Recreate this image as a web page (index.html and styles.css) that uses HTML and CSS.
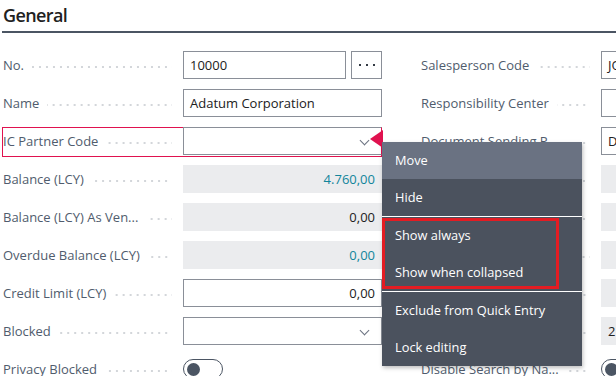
FILE: index.html
```html
<!DOCTYPE html>
<html lang="en">
<head>
  <meta charset="UTF-8">
  <title>Customer Card - General</title>
  <link rel="stylesheet" href="styles.css">
</head>
<body>

<div class="page">
  <h2 class="section-title">General</h2>

  <div class="columns">
    <div class="col">
      <div class="row">
        <span class="label"><span class="caption">No.</span><span class="leader"></span></span>
        <div class="field with-button">
          <div class="box">10000</div>
          <div class="more"><i></i><i></i><i></i></div>
        </div>
      </div>
      <div class="row">
        <span class="label"><span class="caption">Name</span><span class="leader"></span></span>
        <div class="field"><div class="box">Adatum Corporation</div></div>
      </div>
      <div class="row row-selected">
        <span class="label"><span class="caption">IC Partner Code</span><span class="leader"></span></span>
        <div class="field"><div class="box select"><span class="chevron"></span></div></div>
        <span class="pointer"></span>
      </div>
      <div class="row">
        <span class="label"><span class="caption">Balance (LCY)</span><span class="leader"></span></span>
        <div class="field"><div class="box readonly number link">4.760,00</div></div>
      </div>
      <div class="row">
        <span class="label"><span class="caption">Balance (LCY) As Ven...</span><span class="leader"></span></span>
        <div class="field"><div class="box readonly number">0,00</div></div>
      </div>
      <div class="row">
        <span class="label"><span class="caption">Overdue Balance (LCY)</span><span class="leader"></span></span>
        <div class="field"><div class="box readonly number link">0,00</div></div>
      </div>
      <div class="row">
        <span class="label"><span class="caption">Credit Limit (LCY)</span><span class="leader"></span></span>
        <div class="field"><div class="box number">0,00</div></div>
      </div>
      <div class="row">
        <span class="label"><span class="caption">Blocked</span><span class="leader"></span></span>
        <div class="field"><div class="box select"><span class="chevron"></span></div></div>
      </div>
      <div class="row">
        <span class="label"><span class="caption">Privacy Blocked</span><span class="leader"></span></span>
        <div class="field"><span class="toggle"><i></i></span></div>
      </div>
    </div>

    <div class="col">
      <div class="row">
        <span class="label"><span class="caption">Salesperson Code</span><span class="leader"></span></span>
        <div class="field"><div class="box">JO</div></div>
      </div>
      <div class="row">
        <span class="label"><span class="caption">Responsibility Center</span><span class="leader"></span></span>
        <div class="field"><div class="box"></div></div>
      </div>
      <div class="row">
        <span class="label"><span class="caption">Document Sending P...</span><span class="leader"></span></span>
        <div class="field"><div class="box">D</div></div>
      </div>
      <div class="row">
        <span class="label"><span class="caption">Balance Due (LCY)</span><span class="leader"></span></span>
        <div class="field"><div class="box readonly"></div></div>
      </div>
      <div class="row">
        <span class="label"><span class="caption">Payments (LCY)</span><span class="leader"></span></span>
        <div class="field"><div class="box readonly"></div></div>
      </div>
      <div class="row">
        <span class="label"><span class="caption">Sales (LCY)</span><span class="leader"></span></span>
        <div class="field"><div class="box readonly"></div></div>
      </div>
      <div class="row">
        <span class="label"><span class="caption">Profit (LCY)</span><span class="leader"></span></span>
        <div class="field"><div class="box readonly"></div></div>
      </div>
      <div class="row">
        <span class="label"><span class="caption">No. of Documents</span><span class="leader"></span></span>
        <div class="field"><div class="box readonly">2</div></div>
      </div>
      <div class="row">
        <span class="label"><span class="caption">Disable Search by Na...</span><span class="leader"></span></span>
        <div class="field"><span class="toggle"><i></i></span></div>
      </div>
    </div>
  </div>

  <div class="menu">
    <div class="menu-item active">Move</div>
    <div class="menu-item">Hide</div>
    <div class="menu-sep"></div>
    <div class="menu-item">Show always</div>
    <div class="menu-item">Show when collapsed</div>
    <div class="menu-sep"></div>
    <div class="menu-item">Exclude from Quick Entry</div>
    <div class="menu-item">Lock editing</div>
    <div class="highlight"></div>
  </div>
</div>

</body>
</html>
```

FILE: styles.css
```css
* {
  margin: 0;
  padding: 0;
  box-sizing: border-box;
}

html, body {
  width: 616px;
  height: 376px;
  overflow: hidden;
  background: #ffffff;
  font-family: 'Open Sans', 'Noto Sans', sans-serif;
  font-size: 13px;
  color: #212121;
}

.page {
  position: relative;
  height: 100%;
}

.section-title {
  margin: 1px 0 0 2px;
  padding-left: 1px;
  height: 32px;
  line-height: 28px;
  font-size: 18px;
  font-weight: 600;
  letter-spacing: -0.6px;
  color: #212121;
  border-bottom: 2px solid #4b5563;
}

.columns {
  display: flex;
  gap: 39px;
  padding: 13px 0 0 3px;
}

.col {
  flex: 0 0 379px;
  display: flex;
  flex-direction: column;
}

.row {
  position: relative;
  display: flex;
  align-items: center;
  height: 38px;
}

.label {
  flex: 0 0 180px;
  display: flex;
  align-items: center;
  padding-right: 11px;
  color: #505c6d;
  white-space: nowrap;
}

.leader {
  flex: 1;
  height: 2px;
  margin: 3px 0 0 8px;
  background-image: linear-gradient(to right, #d3d6da 2px, transparent 2px);
  background-size: 7px 2px;
  background-repeat: repeat-x;
  background-position: right;
}

.field {
  flex: 0 0 199px;
  display: flex;
  gap: 5px;
}

.box {
  flex: 1;
  height: 28px;
  line-height: 26px;
  padding: 0 6px;
  border: 1px solid #8a8f98;
  background: #ffffff;
  white-space: nowrap;
  overflow: hidden;
  position: relative;
}

.box.readonly {
  border-color: #ebecee;
  background: #ebecee;
}

.box.number {
  text-align: right;
}

.box.link {
  color: #12859b;
}

.more {
  flex: 0 0 31px;
  height: 28px;
  border: 1px solid #8a8f98;
  display: flex;
  align-items: center;
  justify-content: center;
  gap: 5px;
}

.more i {
  width: 2px;
  height: 2px;
  background: #333a44;
}

.chevron {
  position: absolute;
  right: 13px;
  top: 9px;
  width: 7px;
  height: 7px;
  border-right: 1px solid #6b7280;
  border-bottom: 1px solid #6b7280;
  transform: rotate(45deg);
}

.row-selected::before {
  content: "";
  position: absolute;
  left: -1px;
  right: 0;
  top: 5px;
  height: 28px;
  border: 1px solid #e0124f;
  pointer-events: none;
}

.row-selected .box {
  border-right-color: #e0124f;
}

.pointer {
  position: absolute;
  left: 367px;
  top: 8px;
  width: 0;
  height: 0;
  border-top: 9px solid transparent;
  border-bottom: 9px solid transparent;
  border-right: 13px solid #e0124f;
}

.toggle {
  width: 40px;
  height: 20px;
  border: 1px solid #4b5563;
  border-radius: 10px;
  display: flex;
  align-items: center;
  padding-left: 3px;
}

.toggle i {
  width: 13px;
  height: 13px;
  border-radius: 50%;
  background: #4b5563;
}

.menu {
  position: absolute;
  left: 382px;
  top: 141px;
  width: 200px;
  background: #4b525e;
  color: #ffffff;
  font-size: 12.8px;
  box-shadow: 1px 2px 4px rgba(0, 0, 0, 0.25);
}

.menu-item {
  height: 37px;
  line-height: 37px;
  padding-left: 13px;
  white-space: nowrap;
}

.menu-item.active {
  background: #6a7282;
}

.menu-sep {
  height: 1px;
  background: #ffffff;
}

.highlight {
  position: absolute;
  left: 0;
  top: 76px;
  width: 177px;
  height: 71px;
  border: 3px solid #e31c23;
}
```
